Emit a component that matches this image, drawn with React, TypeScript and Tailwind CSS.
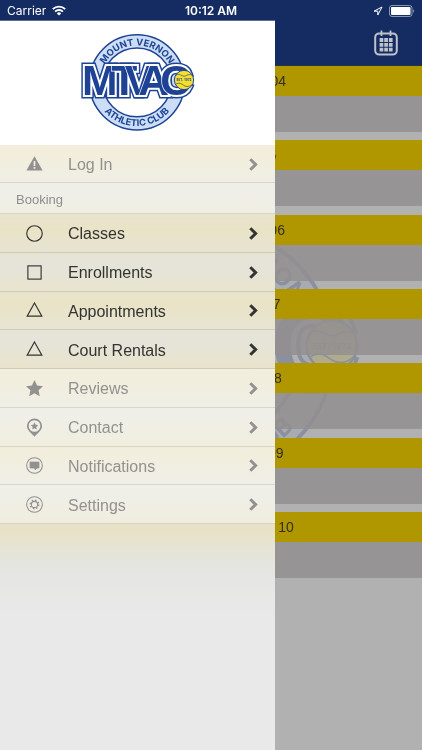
import type { ReactNode } from "react";
import clsx from "clsx";

type MenuItem = {
  label: string;
  icon: ReactNode;
  active?: boolean;
};

type LogoProps = {
  id: string;
  className?: string;
};

const days = [
  "Thursday September 04",
  "Friday September 05",
  "Saturday September 06",
  "Sunday September 07",
  "Monday September 08",
  "Tuesday September 09",
  "Wednesday September 10",
];

const triangle = <path d="M9 1L16.8 15H1.2Z" stroke="currentColor" strokeWidth="1.2" />;

const logIn: MenuItem = {
  label: "Log In",
  icon: (
    <>
      <path d="M9 0.2L17.6 15.4H0.4Z" fill="currentColor" />
      <path d="M9 5.4V10.6M9 11.6V13.6" stroke="#f1eedd" strokeWidth="1.8" />
    </>
  ),
};

const menuItems: MenuItem[] = [
  {
    label: "Classes",
    active: true,
    icon: <circle cx="9" cy="9" r="8.2" stroke="currentColor" strokeWidth="1.2" />,
  },
  {
    label: "Enrollments",
    active: true,
    icon: <rect x="2" y="2" width="14" height="14" stroke="currentColor" strokeWidth="1.2" />,
  },
  { label: "Appointments", active: true, icon: triangle },
  { label: "Court Rentals", active: true, icon: triangle },
  {
    label: "Reviews",
    icon: (
      <path
        d="M9 0L11.7 5.9L18 6.6L13.3 10.9L14.6 17.2L9 14L3.4 17.2L4.7 10.9L0 6.6L6.3 5.9Z"
        fill="currentColor"
      />
    ),
  },
  {
    label: "Contact",
    icon: (
      <>
        <path
          d="M9 -0.6A8 8 0 0 0 1 7.4C1 12 5.4 14.6 9 18.8C12.6 14.6 17 12 17 7.4A8 8 0 0 0 9 -0.6ZM9 1.2A6.2 6.2 0 1 1 9 13.6A6.2 6.2 0 1 1 9 1.2Z"
          fill="currentColor"
          fillRule="evenodd"
        />
        <path d="M9 3.4L10.2 6.1L13 6.4L10.9 8.4L11.5 11.2L9 9.8L6.5 11.2L7.1 8.4L5 6.4L7.8 6.1Z" fill="currentColor" />
      </>
    ),
  },
  {
    label: "Notifications",
    icon: (
      <>
        <circle cx="9" cy="9" r="8.3" stroke="currentColor" strokeWidth="1.1" />
        <path d="M4.3 5.4H13.7V11.6H11.4L9.8 13.6L9.2 11.6H4.3Z" fill="currentColor" stroke="currentColor" strokeLinejoin="round" />
      </>
    ),
  },
  {
    label: "Settings",
    icon: (
      <>
        <circle cx="9" cy="9" r="8.3" stroke="currentColor" strokeWidth="1.1" />
        <circle cx="9" cy="9" r="3.3" stroke="currentColor" strokeWidth="1.1" />
        <circle cx="9" cy="9" r="4.5" stroke="currentColor" strokeWidth="1.5" strokeDasharray="1.6 1.93" />
      </>
    ),
  },
];

function Logo({ id, className }: LogoProps) {
  return (
    <svg viewBox="0 0 405 348" className={className} fill="none" role="img" aria-label="Mount Vernon Athletic Club">
      <defs>
        <path id={`${id}-top`} d="M90 175A111 111 0 0 1 312 175" />
        <path id={`${id}-bottom`} d="M70 175A131 131 0 0 0 332 175" />
        <text id={`${id}-name`} y="212" fontFamily="'Liberation Sans', sans-serif" fontSize="128" fontWeight="700">
          <tspan x="36">M</tspan>
          <tspan x="124">T</tspan>
          <tspan x="164">V</tspan>
          <tspan x="205">A</tspan>
          <tspan x="271">C</tspan>
        </text>
      </defs>
      <circle cx="201" cy="175" r="123" stroke="#1f4394" strokeWidth="44" />
      <circle cx="201" cy="175" r="123" stroke="#cbdef5" strokeWidth="35" />
      <g fill="#1f4394" fontFamily="Inter, sans-serif" fontSize="28" fontWeight="700">
        <text textAnchor="middle">
          <textPath href={`#${id}-top`} startOffset="50%">MOUNT VERNON</textPath>
        </text>
        <text textAnchor="middle">
          <textPath href={`#${id}-bottom`} startOffset="50%">ATHLETIC CLUB</textPath>
        </text>
      </g>
      <g strokeMiterlimit="2">
        <use href={`#${id}-name`} stroke="#1f4394" strokeWidth="21" />
        <use href={`#${id}-name`} stroke="#ffffff" strokeWidth="12" />
        <use href={`#${id}-name`} fill="#1f4394" stroke="#ffffff" strokeWidth="4" style={{ paintOrder: "stroke" }} />
      </g>
      <circle cx="342" cy="168" r="29" fill="#f5de2c" stroke="#1f4394" strokeWidth="3" />
      <path
        d="M317 155C328 144 336 160 346 156C354 152 360 149 368 155M317 181C328 174 334 179 341 184C350 190 360 188 368 180"
        stroke="#1f4394"
        strokeWidth="2"
      />
      <text x="342" y="172" textAnchor="middle" fill="#1f4394" fontFamily="'Open Sans', sans-serif" fontSize="10" fontWeight="700">
        EST. 1972
      </text>
    </svg>
  );
}

function StatusBar() {
  return (
    <div className="grid h-5 grid-cols-3 items-center bg-[#142c62] px-[7px] pt-px font-[Inter,sans-serif] text-xs text-white">
      <div className="flex items-center gap-[6px]">
        <span>Carrier</span>
        <svg viewBox="0 0 14 11" className="h-[11px] w-[14px]" fill="none" aria-hidden>
          <path d="M0.8 4.2A8.8 8.8 0 0 1 13.2 4.2" stroke="currentColor" strokeWidth="1.9" />
          <path d="M3.1 6.6A5.6 5.6 0 0 1 10.9 6.6" stroke="currentColor" strokeWidth="1.8" />
          <path d="M7 10.6L4.8 8.4A3.1 3.1 0 0 1 9.2 8.4Z" fill="currentColor" />
        </svg>
      </div>
      <span className="text-center font-semibold">10:12 AM</span>
      <div className="flex items-center justify-end gap-[6px]">
        <svg viewBox="0 0 10 10" className="size-[10px]" fill="none" aria-hidden>
          <path d="M9 1L1 5.2H4.8V9Z" stroke="currentColor" strokeWidth="1" strokeLinejoin="round" />
        </svg>
        <svg viewBox="0 0 26 12" className="h-3 w-[26px]" fill="none" aria-hidden>
          <rect x="0.5" y="0.5" width="22.5" height="11" rx="2.5" stroke="currentColor" strokeOpacity="0.5" />
          <rect x="2" y="2" width="19.5" height="8" rx="1" fill="currentColor" />
          <path d="M24.2 4.2C25.6 4.8 25.6 7.2 24.2 7.8Z" fill="currentColor" fillOpacity="0.5" />
        </svg>
      </div>
    </div>
  );
}

function MenuRow({ item, className }: { item: MenuItem; className?: string }) {
  return (
    <button
      type="button"
      className={clsx(
        "flex w-full items-center border-b border-black/10 pt-px pr-[17px] pl-[26px] text-left text-base",
        item.active ? "text-[#333331]" : "bg-white/40 text-[#929190]",
        className,
      )}
    >
      <svg viewBox="0 0 18 18" className="mr-[25px] size-[17px] overflow-visible" fill="none" aria-hidden>
        {item.icon}
      </svg>
      <span className="flex-1 pt-[2px]">{item.label}</span>
      <svg viewBox="0 0 9 13" className="h-[13px] w-[9px]" fill="none" aria-hidden>
        <path d="M1.3 1.3L6.6 6.5L1.3 11.7" stroke="currentColor" strokeWidth="3" />
      </svg>
    </button>
  );
}

function Drawer() {
  return (
    <aside className="absolute top-5 bottom-0 left-0 z-10 flex w-[275px] flex-col border-t border-[#5d6c95] bg-[#e9e9e9]">
      <div className="flex h-[124px] justify-center bg-white pt-[3px]">
        <Logo id="brand" className="h-[116px] w-[135px]" />
      </div>
      <nav className="flex-1 bg-[linear-gradient(180deg,#e9e3c4_10px,#e5e4da_47px,#e9e3c6_84px,#e5e4da_121px,#e9e3c6_159px,#e5e4da_196px,#e9e3c6_233px,#e5e4da_270px,#e9e3c6_307px,#e5e4da_345px,#e8e2c5_384px,#e5e4d8_408px,#e5e5e3_424px,#e9e9e9_470px)]">
        <MenuRow item={logIn} className="h-[38px]" />
        <h2 className="h-[31px] border-b border-black/10 bg-white/40 pl-4 text-[13px] leading-[33px] text-[#8e8d8c]">
          Booking
        </h2>
        <div className="flex h-[310px] flex-col">
          {menuItems.map((item) => (
            <MenuRow key={item.label} item={item} className="flex-1" />
          ))}
        </div>
      </nav>
    </aside>
  );
}

export default function App() {
  return (
    <div className="relative min-h-screen overflow-hidden bg-[#b1b1b1] font-['Liberation_Sans',Arial,sans-serif]">
      <StatusBar />
      <header className="flex h-[46px] items-center justify-end border-b border-[#26364a] bg-[#142c62] pr-6">
        <button type="button" aria-label="Calendar" className="text-[#bfc2cb]">
          <svg viewBox="0 0 24 26" className="h-[26px] w-6" fill="none" aria-hidden>
            <rect x="1.2" y="3.4" width="21.6" height="21.2" rx="4" stroke="currentColor" strokeWidth="2" />
            <path d="M7.5 0.5V6M16.5 0.5V6" stroke="currentColor" strokeWidth="1.8" />
            <path d="M5.6 10H18.6M5.6 14.8H18.6M5.6 19.6H18.6" stroke="currentColor" strokeWidth="3.8" strokeDasharray="3.7 0.95" />
          </svg>
        </button>
      </header>
      <main className="relative">
        <Logo
          id="watermark"
          className="absolute top-[134px] left-1/2 w-[351px] -translate-x-1/2 opacity-25 mix-blend-multiply"
        />
        <ul className="relative flex h-[512px] flex-col justify-between">
          {days.map((day) => (
            <li key={day}>
              <h3 className="h-[30px] bg-[#b09700] text-center text-sm leading-[30px] text-[#33301f]">{day}</h3>
              <div className="h-9 bg-[#938f90]/85" />
            </li>
          ))}
        </ul>
      </main>
      <Drawer />
    </div>
  );
}
